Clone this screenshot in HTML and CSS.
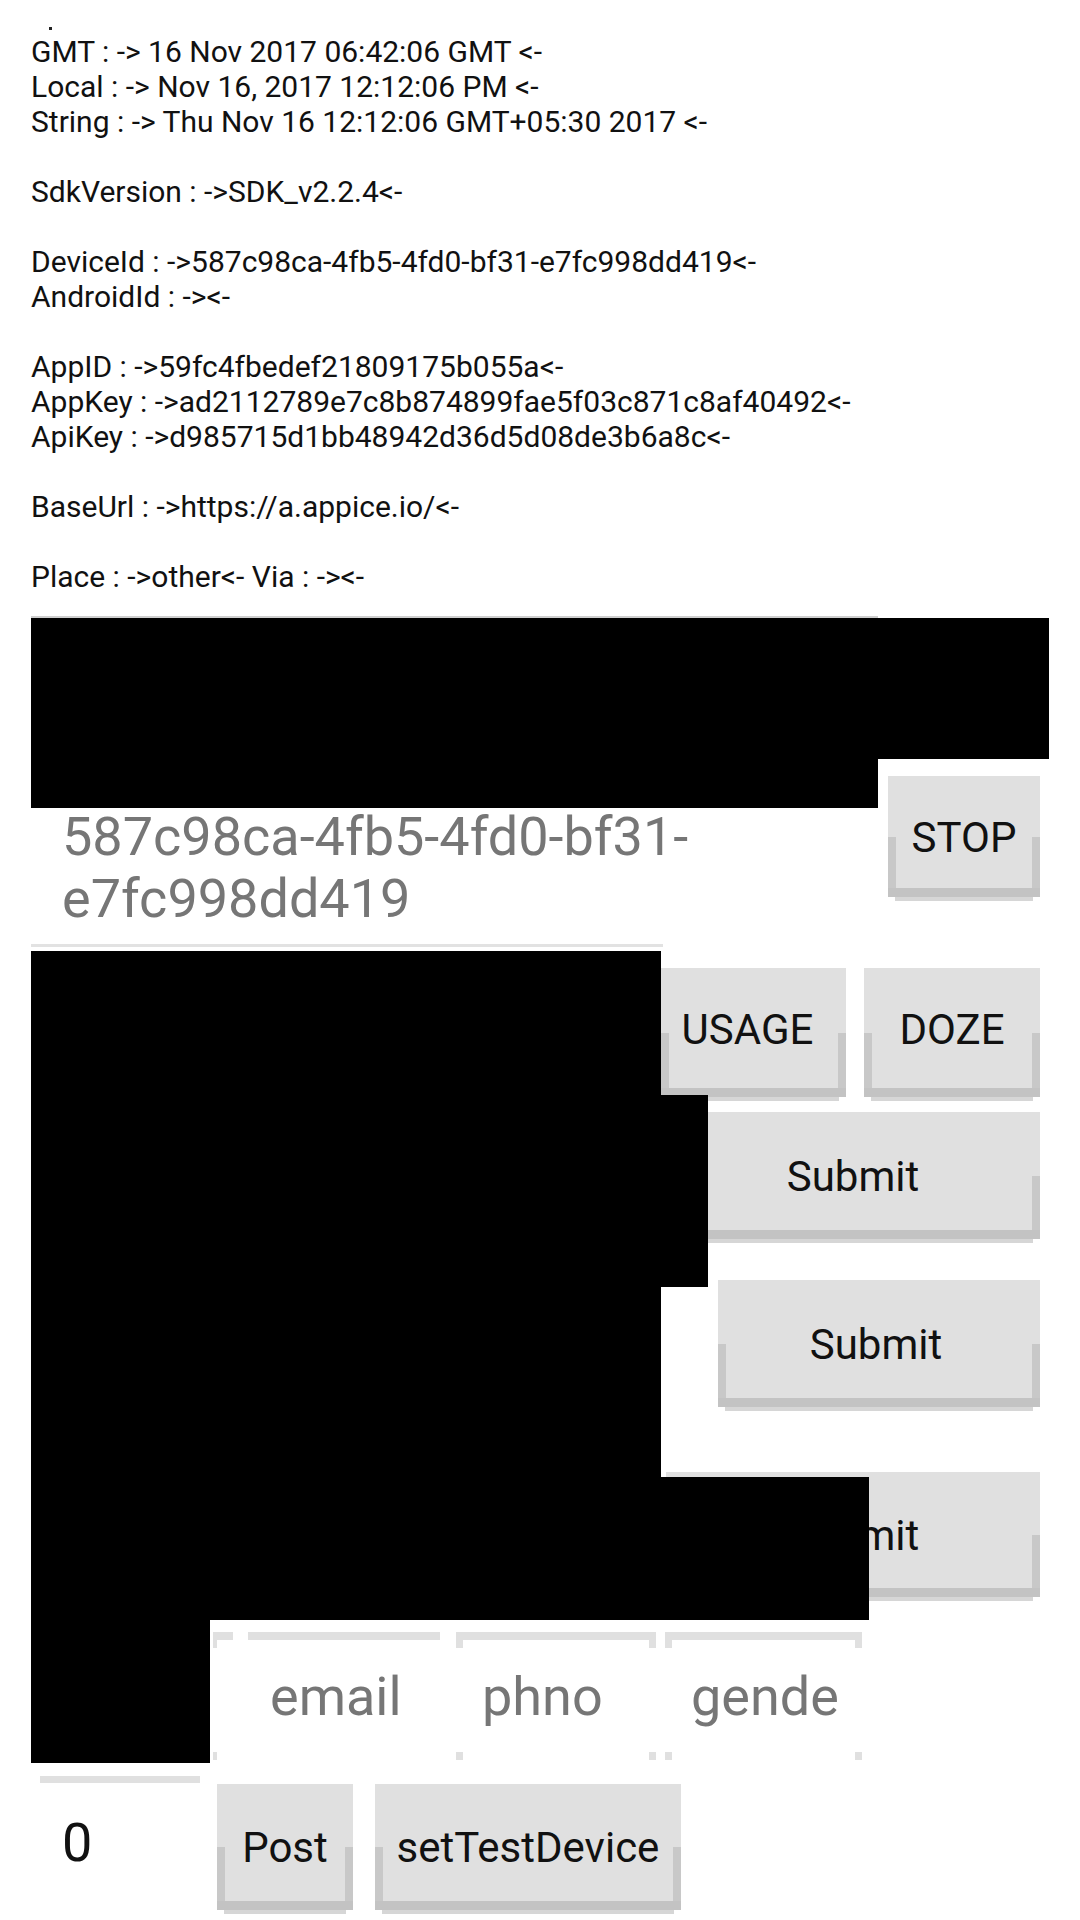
FILE: index.html
```html
<!DOCTYPE html>
<html>
<head>
<meta charset="utf-8">
<link rel="stylesheet" href="styles.css">
</head>
<body>
<div class="screen">
  <div class="info">
    <div class="dotline"><span class="dot"></span></div>
    <p>GMT : -&gt; 16 Nov 2017 06:42:06 GMT &lt;-</p>
    <p>Local : -&gt; Nov 16, 2017 12:12:06 PM &lt;-</p>
    <p>String : -&gt; Thu Nov 16 12:12:06 GMT+05:30 2017 &lt;-</p>
    <p class="blank"></p>
    <p>SdkVersion : -&gt;SDK_v2.2.4&lt;-</p>
    <p class="blank"></p>
    <p>DeviceId : -&gt;587c98ca-4fb5-4fd0-bf31-e7fc998dd419&lt;-</p>
    <p>AndroidId : -&gt;&lt;-</p>
    <p class="blank"></p>
    <p>AppID : -&gt;59fc4fbedef21809175b055a&lt;-</p>
    <p>AppKey : -&gt;ad2112789e7c8b874899fae5f03c871c8af40492&lt;-</p>
    <p>ApiKey : -&gt;d985715d1bb48942d36d5d08de3b6a8c&lt;-</p>
    <p class="blank"></p>
    <p>BaseUrl : -&gt;https://a.appice.io/&lt;-</p>
    <p class="blank"></p>
    <p>Place : -&gt;other&lt;- Via : -&gt;&lt;-</p>
  </div>

  <div class="row-a">
    <div class="col-a">
      <div class="masked-input"></div>
      <div class="device-id">587c98ca-4fb5-4fd0-bf31-<br>e7fc998dd419</div>
      <div class="underline"></div>
    </div>
    <button class="btn btn-stop"><span class="label">STOP</span></button>
  </div>

  <div class="row-b">
    <div class="col-b"></div>
    <div class="actions">
      <div class="pair">
        <button class="btn btn-usage"><span class="label">USAGE</span></button>
        <button class="btn btn-doze"><span class="label">DOZE</span></button>
      </div>
      <button class="btn btn-submit btn-submit-1"><span class="label">Submit</span></button>
      <button class="btn btn-submit btn-submit-2"><span class="label">Submit</span></button>
      <button class="btn btn-submit btn-submit-3"><span class="label">Submit</span></button>
    </div>
  </div>

  <div class="row-c">
    <div class="masked-small"></div>
    <div class="field field-email">email</div>
    <div class="field field-phno">phno</div>
    <div class="field field-gender">gende</div>
  </div>

  <div class="row-d">
    <div class="counter">0</div>
    <button class="btn btn-post"><span class="label">Post</span></button>
    <button class="btn btn-test"><span class="label">setTestDevice</span></button>
  </div>
</div>

<div class="redact r1"></div>
<div class="redact r2"></div>
<div class="redact r3"></div>
<div class="redact r4"></div>
<div class="redact r5"></div>
<div class="redact r6"></div>
</body>
</html>
```

FILE: styles.css
```css
html, body {
  margin: 0;
  padding: 0;
  background: #ffffff;
}

body {
  position: relative;
  width: 1080px;
  height: 1920px;
  overflow: hidden;
  font-family: Roboto, "Noto Sans", sans-serif;
}

.screen {
  padding: 0 40px 0 31px;
}

/* ---------- info text block ---------- */
.info {
  font-size: 30px;
  line-height: 35px;
  color: #111111;
}

.info p {
  margin: 0;
  height: 35px;
  white-space: pre;
}

.dotline {
  height: 34px;
  position: relative;
}

.dot {
  display: block;
  width: 3px;
  height: 3px;
  margin-left: 18px;
  position: relative;
  top: 27px;
  background: #222222;
}

/* ---------- row A ---------- */
.row-a {
  display: flex;
  justify-content: space-between;
  align-items: flex-start;
  margin-top: 22px;
}

.col-a {
  width: 847px;
}

.masked-input {
  height: 188px;
  border-top: 2px solid #cfcfcf;
}

.device-id {
  padding-left: 31px;
  font-size: 54px;
  line-height: 62px;
  color: #767676;
  white-space: nowrap;
}

.underline {
  width: 632px;
  height: 3px;
  margin-top: 14px;
  background: #e2e2e2;
}

/* ---------- buttons ---------- */
.btn {
  position: relative;
  display: flex;
  align-items: center;
  justify-content: center;
  margin: 0;
  padding: 0;
  border: 0;
  background: #e0e0e0;
  font-family: Roboto, "Noto Sans", sans-serif;
  font-size: 42px;
  line-height: 1;
  color: #111111;
  box-shadow: inset 0 -9px 0 #c3c3c3, 0 11px 0 -7px #d6d6d6;
}

.btn::before {
  content: "";
  position: absolute;
  left: 0;
  right: 0;
  top: 50%;
  bottom: 9px;
  background: linear-gradient(to right, #c8c8c8 8px, transparent 8px, transparent calc(100% - 8px), #c8c8c8 calc(100% - 8px));
}

.btn .label {
  position: relative;
  padding-top: 2px;
}

.btn-stop {
  width: 152px;
  height: 121px;
  margin-top: 160px;
}

/* ---------- row B ---------- */
.row-b {
  display: flex;
  justify-content: space-between;
  margin-top: 4px;
}

.col-b {
  width: 630px;
}

.actions {
  display: flex;
  flex-direction: column;
  align-items: flex-end;
}

.pair {
  display: flex;
  gap: 18px;
  margin-top: 17px;
}

.pair .label {
  padding-top: 0;
  margin-bottom: 6px;
}

.btn-usage {
  width: 185px;
  height: 129px;
}

.btn-usage .label {
  margin-right: 12px;
}

.btn-doze {
  width: 176px;
  height: 129px;
}

.btn-submit {
  height: 127px;
}

.btn-submit-1 {
  width: 374px;
  margin-top: 15px;
}

.btn-submit-2 {
  width: 322px;
  margin-top: 41px;
}

.btn-submit-2 .label {
  margin-right: 6px;
}

.btn-submit-3 {
  width: 374px;
  height: 125px;
  margin-top: 65px;
}

/* ---------- row C (fields) ---------- */
.row-c {
  display: flex;
  margin-top: 35px;
}

.masked-small {
  width: 182px;
  height: 128px;
}

.field {
  position: relative;
  box-sizing: border-box;
  height: 128px;
  padding: 34px 0 0 26px;
  font-size: 54px;
  line-height: 62px;
  color: #767676;
  white-space: nowrap;
  overflow: hidden;
  background:
    linear-gradient(#e0e0e0, #e0e0e0) left top / 100% 8px no-repeat,
    linear-gradient(#e0e0e0, #e0e0e0) left 8px / 7px 8px no-repeat,
    linear-gradient(#e0e0e0, #e0e0e0) right 8px / 7px 8px no-repeat,
    linear-gradient(#e0e0e0, #e0e0e0) left bottom / 7px 8px no-repeat,
    linear-gradient(#e0e0e0, #e0e0e0) right bottom / 7px 8px no-repeat;
}

.field-email {
  width: 227px;
  padding-left: 57px;
  background:
    linear-gradient(to right, #e0e0e0 20px, transparent 20px, transparent 35px, #e0e0e0 35px) left top / 100% 8px no-repeat,
    linear-gradient(#e0e0e0, #e0e0e0) left 8px / 4px 8px no-repeat,
    linear-gradient(#e0e0e0, #e0e0e0) left bottom / 4px 8px no-repeat;
}

.field-phno {
  width: 200px;
  margin-left: 16px;
}

.field-gender {
  width: 197px;
  margin-left: 9px;
}

/* ---------- row D ---------- */
.row-d {
  display: flex;
  align-items: flex-start;
  margin-top: 16px;
}

.counter {
  box-sizing: border-box;
  width: 160px;
  height: 120px;
  margin: 0 17px 0 9px;
  padding: 29px 0 0 22px;
  border-top: 7px solid #e0e0e0;
  font-size: 54px;
  line-height: 62px;
  color: #111111;
}

.btn-post {
  width: 136px;
  height: 126px;
  margin-top: 8px;
}

.btn-test {
  width: 306px;
  height: 126px;
  margin-top: 8px;
  margin-left: 22px;
}

/* ---------- redaction overlays ---------- */
.redact {
  position: absolute;
  background: #000000;
}

.r1 { left: 31px; top: 618px; width: 1018px; height: 141px; }
.r2 { left: 31px; top: 618px; width: 847px; height: 190px; }
.r3 { left: 31px; top: 951px; width: 630px; height: 526px; }
.r4 { left: 31px; top: 1095px; width: 677px; height: 192px; }
.r5 { left: 31px; top: 1477px; width: 838px; height: 143px; }
.r6 { left: 31px; top: 1620px; width: 179px; height: 143px; }
```
